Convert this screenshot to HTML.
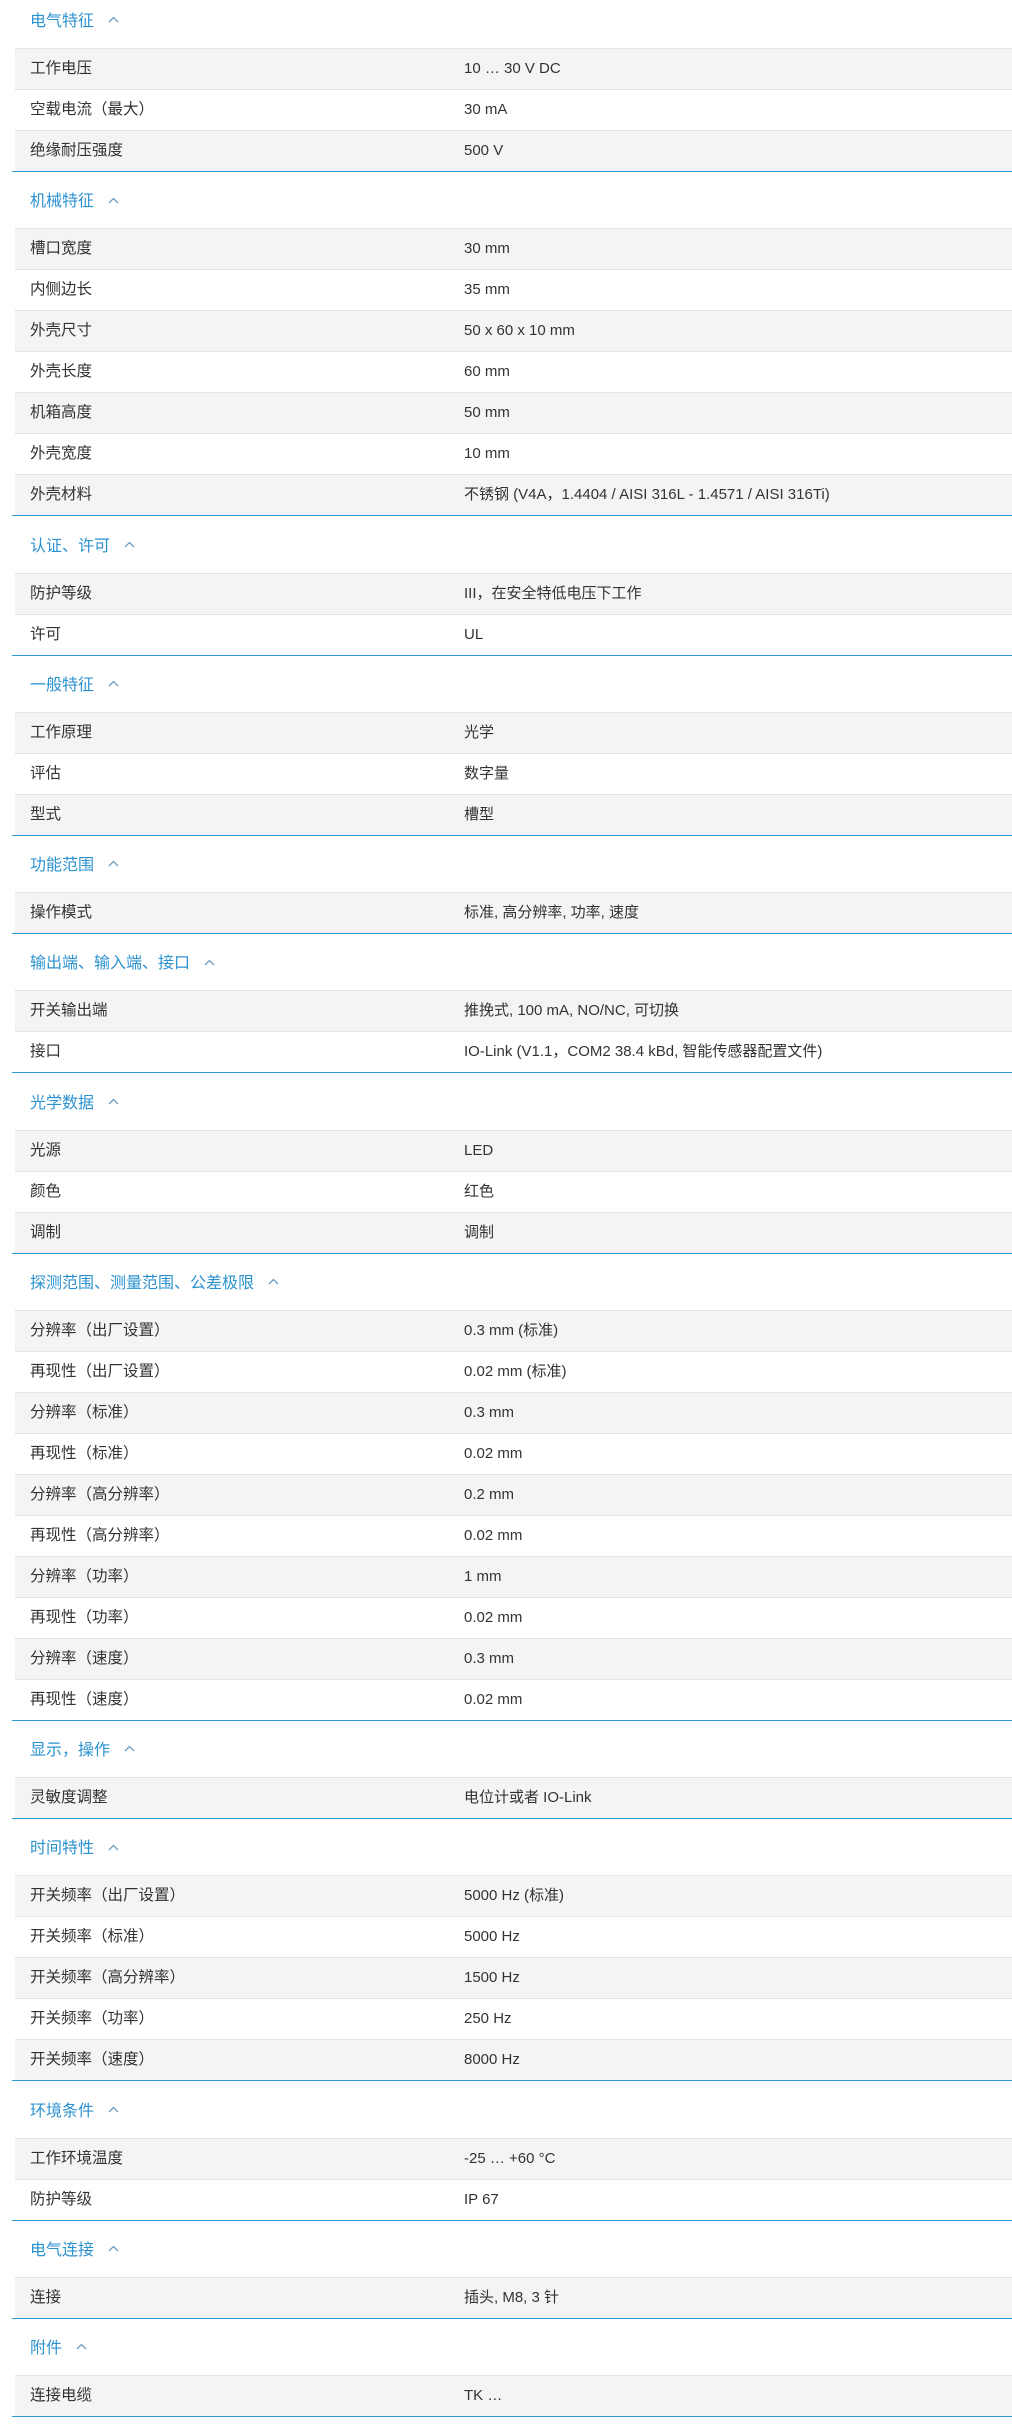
<!DOCTYPE html>
<html><head><meta charset="utf-8"><style>
*{margin:0;padding:0;box-sizing:border-box}
html,body{width:1012px;height:2431px;background:#fff;overflow:hidden}
body{font-family:"Liberation Sans","Noto Sans CJK SC",sans-serif;color:#333;font-size:15px}
.sec{border-bottom:1px solid #2a9ad4;margin-left:12px}
.sec+.sec{margin-top:8.25px}
.h{height:48px;line-height:44px;padding-left:18px;color:#2b92d0;font-size:16px}
.h svg{margin-left:14px;vertical-align:middle;position:relative;top:-2px}
.r{height:41px;border-top:1px solid #e4e4e4;margin-left:3px;line-height:40px;background:#fff;white-space:nowrap}
.r:nth-child(even){background:#f4f4f4}
.l{display:inline-block;width:449px;padding-left:15px;font-size:15.5px;vertical-align:top}
.v{display:inline-block;font-size:15px;vertical-align:top}
</style></head><body>
<div id="c"></div>
<script>
var d=[
["电气特征",[["工作电压","10 … 30 V DC"],["空载电流（最大）","30 mA"],["绝缘耐压强度","500 V"]]],
["机械特征",[["槽口宽度","30 mm"],["内侧边长","35 mm"],["外壳尺寸","50 x 60 x 10 mm"],["外壳长度","60 mm"],["机箱高度","50 mm"],["外壳宽度","10 mm"],["外壳材料","不锈钢 (V4A，1.4404 / AISI 316L - 1.4571 / AISI 316Ti)"]]],
["认证、许可",[["防护等级","III，在安全特低电压下工作"],["许可","UL"]]],
["一般特征",[["工作原理","光学"],["评估","数字量"],["型式","槽型"]]],
["功能范围",[["操作模式","标准, 高分辨率, 功率, 速度"]]],
["输出端、输入端、接口",[["开关输出端","推挽式, 100 mA, NO/NC, 可切换"],["接口","IO-Link (V1.1，COM2 38.4 kBd, 智能传感器配置文件)"]]],
["光学数据",[["光源","LED"],["颜色","红色"],["调制","调制"]]],
["探测范围、测量范围、公差极限",[["分辨率（出厂设置）","0.3 mm (标准)"],["再现性（出厂设置）","0.02 mm (标准)"],["分辨率（标准）","0.3 mm"],["再现性（标准）","0.02 mm"],["分辨率（高分辨率）","0.2 mm"],["再现性（高分辨率）","0.02 mm"],["分辨率（功率）","1 mm"],["再现性（功率）","0.02 mm"],["分辨率（速度）","0.3 mm"],["再现性（速度）","0.02 mm"]]],
["显示，操作",[["灵敏度调整","电位计或者 IO-Link"]]],
["时间特性",[["开关频率（出厂设置）","5000 Hz (标准)"],["开关频率（标准）","5000 Hz"],["开关频率（高分辨率）","1500 Hz"],["开关频率（功率）","250 Hz"],["开关频率（速度）","8000 Hz"]]],
["环境条件",[["工作环境温度","-25 … +60 °C"],["防护等级","IP 67"]]],
["电气连接",[["连接","插头, M8, 3 针"]]],
["附件",[["连接电缆","TK …"]]]
];
var h="";
var chev='<svg width="11" height="7" viewBox="0 0 11 7"><path d="M1 6 L5.5 1.5 L10 6" fill="none" stroke="#6a9cc0" stroke-width="1.3"/></svg>';
d.forEach(function(s){
h+='<div class="sec"><div class="h">'+s[0]+chev+'</div>';
s[1].forEach(function(r){h+='<div class="r"><span class="l">'+r[0]+'</span><span class="v">'+r[1]+'</span></div>';});
h+='</div>';});
document.getElementById("c").innerHTML=h;
</script>
</body></html>
